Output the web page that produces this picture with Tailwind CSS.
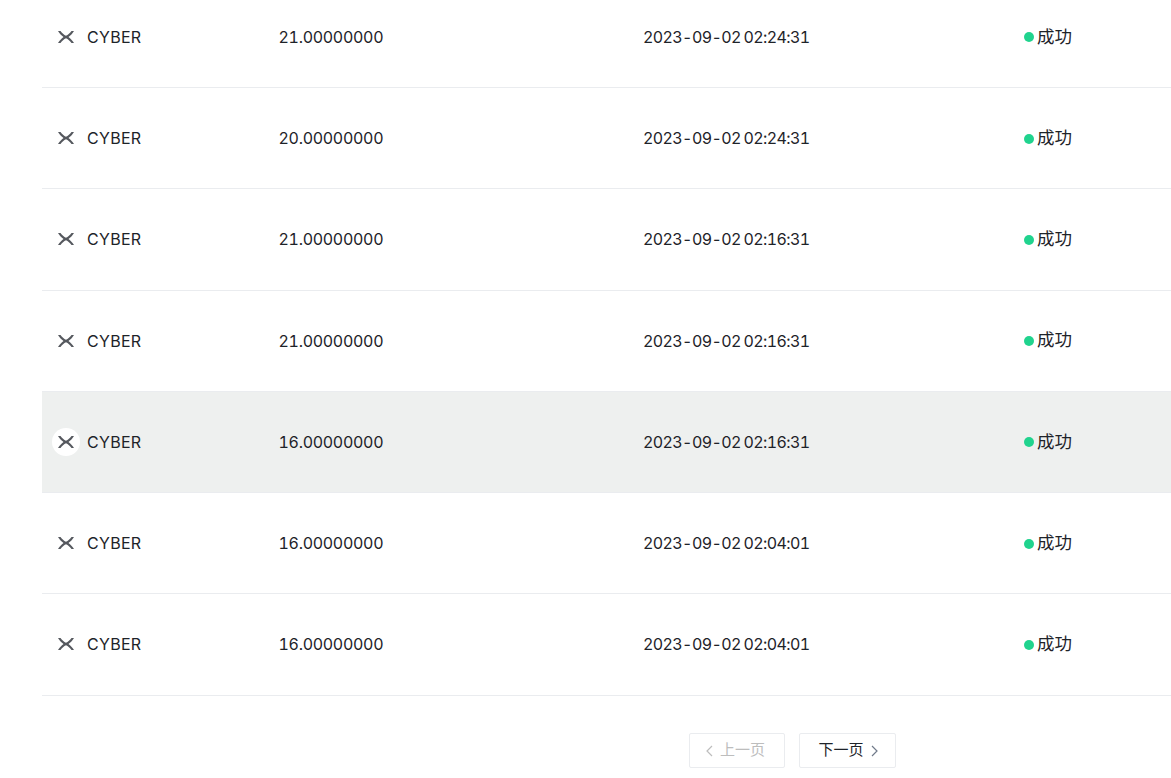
<!DOCTYPE html>
<html lang="zh">

<head>
  <meta charset="UTF-8" />
  <title>Records</title>
  <script src="https://cdn.jsdelivr.net/npm/@tailwindcss/browser@4"></script>
</head>

<body class="bg-white overflow-hidden h-[778px] font-['Inter','Noto_Sans_CJK_SC',sans-serif] text-[#1e2329]">
  <div class="ml-[42px] -mt-[13px]">
    <div id="rows">
      <div class="h-[101.22px] pb-[0.4px] border-b border-[#eaecef] grid grid-cols-[236.5px_364.5px_381px_1fr] items-center text-[16px] tabular-nums">
        <div class="flex items-center"><span class="w-[28px] h-[28px] ml-[10px] mr-[7px] rounded-full flex items-center justify-center"><svg width="16" height="12" viewBox="0 0 16 12" fill="#55585e"><path d="M0 0 L2.5 0 C4 2 6 4 8 4.8 C10 4 12 2 13.5 0 L16 0 C14.5 2.5 12.5 4.5 10.5 6 C12.5 7.5 14.5 9.500 16 12 L13.500 12 C12 10 10 8 8 7.200 C6 8 4 10 2.500 12 L0 12 C1.500 9.500 3.500 7.500 5.500 6 C3.500 4.500 1.500 2.500 0 0 Z" /></svg></span><span class="tracking-[0.3px]">CYBER</span></div>
        <div class="tracking-[-0.3px]">21.00000000</div>
        <div class="tracking-[-0.6px] [word-spacing:-1px]">2023-09-02 02:24:31</div>
        <div class="flex items-center text-[17.5px]"><span class="w-[10px] h-[10px] mr-[3px] mt-[1px] rounded-full bg-[#20d38e]"></span>成功</div>
      </div>
      <div class="h-[101.22px] pb-[0.4px] border-b border-[#eaecef] grid grid-cols-[236.5px_364.5px_381px_1fr] items-center text-[16px] tabular-nums">
        <div class="flex items-center"><span class="w-[28px] h-[28px] ml-[10px] mr-[7px] rounded-full flex items-center justify-center"><svg width="16" height="12" viewBox="0 0 16 12" fill="#55585e"><path d="M0 0 L2.5 0 C4 2 6 4 8 4.8 C10 4 12 2 13.5 0 L16 0 C14.5 2.5 12.5 4.5 10.5 6 C12.5 7.5 14.5 9.500 16 12 L13.500 12 C12 10 10 8 8 7.200 C6 8 4 10 2.500 12 L0 12 C1.500 9.500 3.500 7.500 5.500 6 C3.500 4.500 1.500 2.500 0 0 Z" /></svg></span><span class="tracking-[0.3px]">CYBER</span></div>
        <div class="tracking-[-0.3px]">20.00000000</div>
        <div class="tracking-[-0.6px] [word-spacing:-1px]">2023-09-02 02:24:31</div>
        <div class="flex items-center text-[17.5px]"><span class="w-[10px] h-[10px] mr-[3px] mt-[1px] rounded-full bg-[#20d38e]"></span>成功</div>
      </div>
      <div class="h-[101.22px] pb-[0.4px] border-b border-[#eaecef] grid grid-cols-[236.5px_364.5px_381px_1fr] items-center text-[16px] tabular-nums">
        <div class="flex items-center"><span class="w-[28px] h-[28px] ml-[10px] mr-[7px] rounded-full flex items-center justify-center"><svg width="16" height="12" viewBox="0 0 16 12" fill="#55585e"><path d="M0 0 L2.5 0 C4 2 6 4 8 4.8 C10 4 12 2 13.5 0 L16 0 C14.5 2.5 12.5 4.5 10.5 6 C12.5 7.5 14.5 9.500 16 12 L13.500 12 C12 10 10 8 8 7.200 C6 8 4 10 2.500 12 L0 12 C1.500 9.500 3.500 7.500 5.500 6 C3.500 4.500 1.500 2.500 0 0 Z" /></svg></span><span class="tracking-[0.3px]">CYBER</span></div>
        <div class="tracking-[-0.3px]">21.00000000</div>
        <div class="tracking-[-0.6px] [word-spacing:-1px]">2023-09-02 02:16:31</div>
        <div class="flex items-center text-[17.5px]"><span class="w-[10px] h-[10px] mr-[3px] mt-[1px] rounded-full bg-[#20d38e]"></span>成功</div>
      </div>
      <div class="h-[101.22px] pb-[0.4px] border-b border-[#eaecef] grid grid-cols-[236.5px_364.5px_381px_1fr] items-center text-[16px] tabular-nums">
        <div class="flex items-center"><span class="w-[28px] h-[28px] ml-[10px] mr-[7px] rounded-full flex items-center justify-center"><svg width="16" height="12" viewBox="0 0 16 12" fill="#55585e"><path d="M0 0 L2.5 0 C4 2 6 4 8 4.8 C10 4 12 2 13.5 0 L16 0 C14.5 2.5 12.5 4.5 10.5 6 C12.5 7.5 14.5 9.500 16 12 L13.500 12 C12 10 10 8 8 7.200 C6 8 4 10 2.500 12 L0 12 C1.500 9.500 3.500 7.500 5.500 6 C3.500 4.500 1.500 2.500 0 0 Z" /></svg></span><span class="tracking-[0.3px]">CYBER</span></div>
        <div class="tracking-[-0.3px]">21.00000000</div>
        <div class="tracking-[-0.6px] [word-spacing:-1px]">2023-09-02 02:16:31</div>
        <div class="flex items-center text-[17.5px]"><span class="w-[10px] h-[10px] mr-[3px] mt-[1px] rounded-full bg-[#20d38e]"></span>成功</div>
      </div>
      <div class="h-[101.22px] pb-[0.4px] border-b border-[#eaecef] bg-[#eef0ef] grid grid-cols-[236.5px_364.5px_381px_1fr] items-center text-[16px] tabular-nums">
        <div class="flex items-center"><span class="w-[28px] h-[28px] ml-[10px] mr-[7px] rounded-full bg-white flex items-center justify-center"><svg width="16" height="12" viewBox="0 0 16 12" fill="#55585e"><path d="M0 0 L2.5 0 C4 2 6 4 8 4.8 C10 4 12 2 13.5 0 L16 0 C14.5 2.5 12.5 4.5 10.5 6 C12.5 7.5 14.5 9.500 16 12 L13.500 12 C12 10 10 8 8 7.200 C6 8 4 10 2.500 12 L0 12 C1.500 9.500 3.500 7.500 5.500 6 C3.500 4.500 1.500 2.500 0 0 Z" /></svg></span><span class="tracking-[0.3px]">CYBER</span></div>
        <div class="tracking-[-0.3px]">16.00000000</div>
        <div class="tracking-[-0.6px] [word-spacing:-1px]">2023-09-02 02:16:31</div>
        <div class="flex items-center text-[17.5px]"><span class="w-[10px] h-[10px] mr-[3px] mt-[1px] rounded-full bg-[#20d38e]"></span>成功</div>
      </div>
      <div class="h-[101.22px] pb-[0.4px] border-b border-[#eaecef] grid grid-cols-[236.5px_364.5px_381px_1fr] items-center text-[16px] tabular-nums">
        <div class="flex items-center"><span class="w-[28px] h-[28px] ml-[10px] mr-[7px] rounded-full flex items-center justify-center"><svg width="16" height="12" viewBox="0 0 16 12" fill="#55585e"><path d="M0 0 L2.5 0 C4 2 6 4 8 4.8 C10 4 12 2 13.5 0 L16 0 C14.5 2.5 12.5 4.5 10.5 6 C12.5 7.5 14.5 9.500 16 12 L13.500 12 C12 10 10 8 8 7.200 C6 8 4 10 2.500 12 L0 12 C1.500 9.500 3.500 7.500 5.500 6 C3.500 4.500 1.500 2.500 0 0 Z" /></svg></span><span class="tracking-[0.3px]">CYBER</span></div>
        <div class="tracking-[-0.3px]">16.00000000</div>
        <div class="tracking-[-0.6px] [word-spacing:-1px]">2023-09-02 02:04:01</div>
        <div class="flex items-center text-[17.5px]"><span class="w-[10px] h-[10px] mr-[3px] mt-[1px] rounded-full bg-[#20d38e]"></span>成功</div>
      </div>
      <div class="h-[101.22px] pb-[0.4px] border-b border-[#eaecef] grid grid-cols-[236.5px_364.5px_381px_1fr] items-center text-[16px] tabular-nums">
        <div class="flex items-center"><span class="w-[28px] h-[28px] ml-[10px] mr-[7px] rounded-full flex items-center justify-center"><svg width="16" height="12" viewBox="0 0 16 12" fill="#55585e"><path d="M0 0 L2.5 0 C4 2 6 4 8 4.8 C10 4 12 2 13.5 0 L16 0 C14.5 2.5 12.5 4.5 10.5 6 C12.5 7.5 14.5 9.500 16 12 L13.500 12 C12 10 10 8 8 7.200 C6 8 4 10 2.500 12 L0 12 C1.500 9.500 3.500 7.500 5.500 6 C3.500 4.500 1.500 2.500 0 0 Z" /></svg></span><span class="tracking-[0.3px]">CYBER</span></div>
        <div class="tracking-[-0.3px]">16.00000000</div>
        <div class="tracking-[-0.6px] [word-spacing:-1px]">2023-09-02 02:04:01</div>
        <div class="flex items-center text-[17.5px]"><span class="w-[10px] h-[10px] mr-[3px] mt-[1px] rounded-full bg-[#20d38e]"></span>成功</div>
      </div>
    </div>

    <div class="flex mt-[37.5px] ml-[647px] gap-[14px] text-[15px]">
      <button class="w-[96px] h-[35px] pr-[4px] border border-[#eaecef] rounded-[2px] text-[#bdbdbd] flex items-center justify-center">
        <svg width="8" height="12" viewBox="0 0 8 12" fill="none" stroke="#bdbdbd" stroke-width="1.200" class="mr-[7px]"><path d="M7 1 L2 6 L7 11" /></svg>上一页
      </button>
      <button class="w-[97px] h-[35px] pl-[2px] border border-[#eaecef] rounded-[2px] flex items-center justify-center">
        下一页<svg width="8" height="12" viewBox="0 0 8 12" fill="none" stroke="#707a8a" stroke-width="1.200" class="ml-[7px]"><path d="M1 1 L6 6 L1 11" /></svg>
      </button>
    </div>
  </div>
</body>

</html>
